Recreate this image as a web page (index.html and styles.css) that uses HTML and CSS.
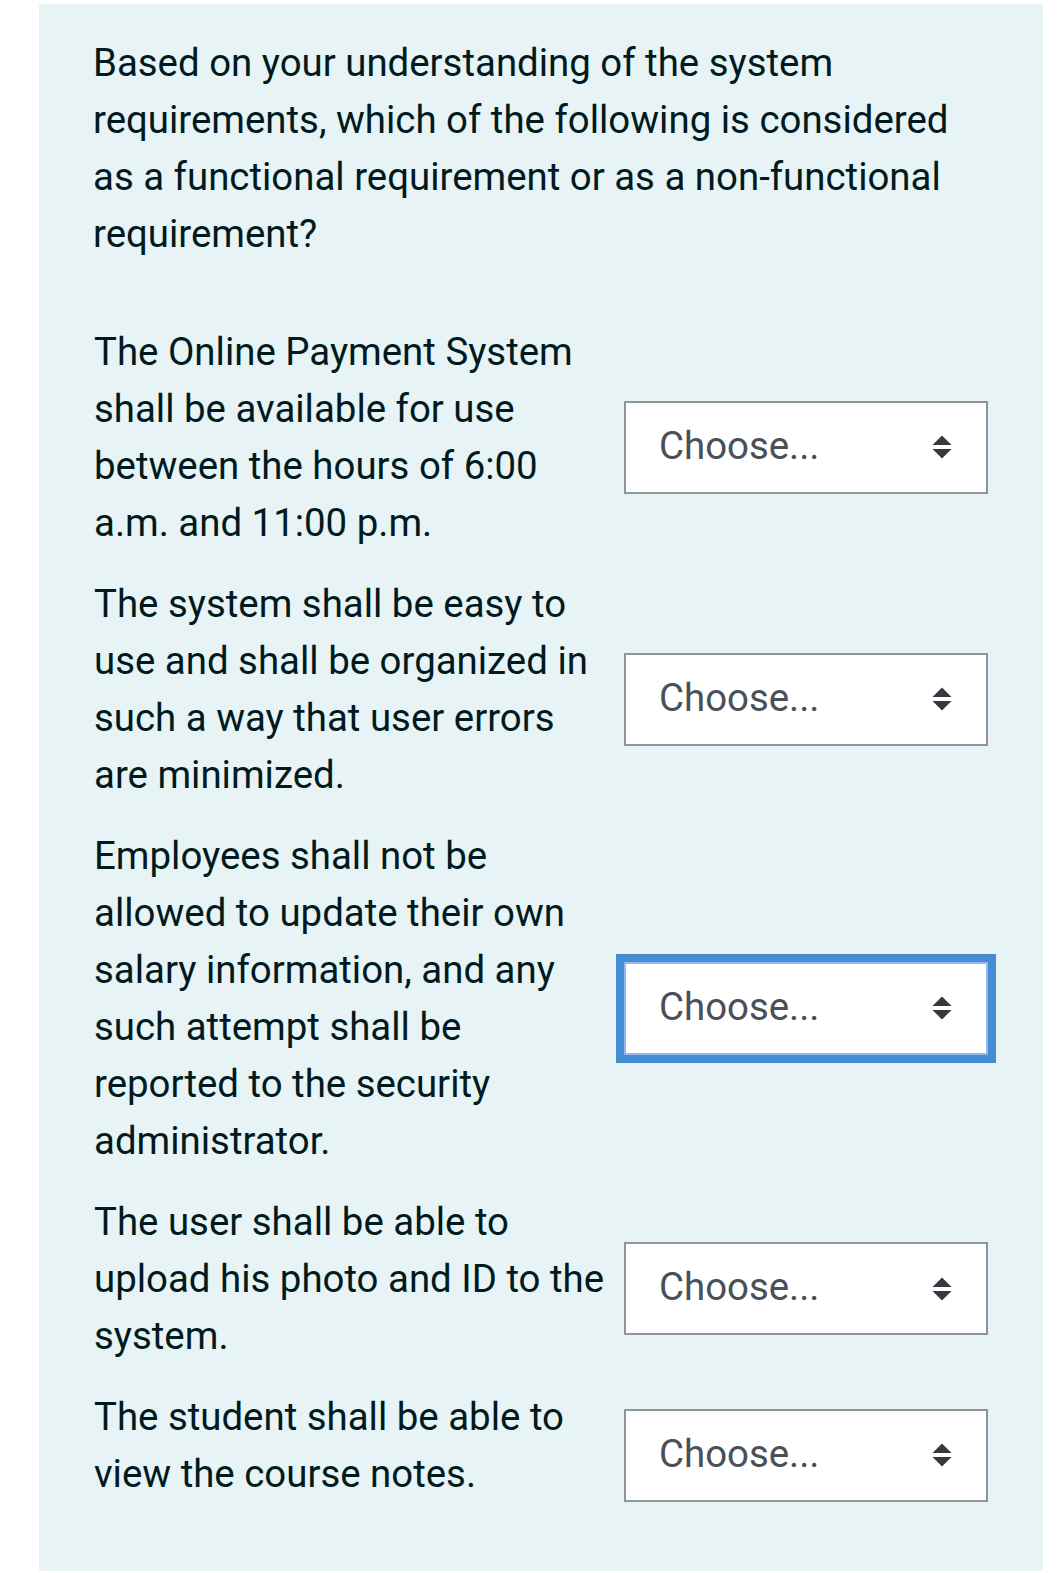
FILE: index.html
```html
<!DOCTYPE html>
<html lang="en">
<head>
<meta charset="utf-8">
<title>Matching question</title>
<link rel="stylesheet" href="styles.css">
</head>
<body>
<div class="panel">
  <p class="question">Based on your understanding of the system requirements, which of the following is considered as a functional requirement or as a non-functional requirement?</p>
  <div class="rows">
    <div class="row">
      <div class="stem">The Online Payment System shall be available for use between the hours of 6:00 a.m. and 11:00 p.m.</div>
      <div class="select"><span>Choose...</span><svg class="arrows" width="22" height="26" viewBox="0 0 22 26"><path d="M1.5 11 L11 1.5 L20.5 11 Z" /><path d="M1.5 15 L20.5 15 L11 24.5 Z" /></svg></div>
    </div>
    <div class="row">
      <div class="stem">The system shall be easy to use and shall be organized in such a way that user errors are minimized.</div>
      <div class="select"><span>Choose...</span><svg class="arrows" width="22" height="26" viewBox="0 0 22 26"><path d="M1.5 11 L11 1.5 L20.5 11 Z" /><path d="M1.5 15 L20.5 15 L11 24.5 Z" /></svg></div>
    </div>
    <div class="row">
      <div class="stem">Employees shall not be allowed to update their own salary information, and any such attempt shall be reported to the security administrator.</div>
      <div class="select focused"><span>Choose...</span><svg class="arrows" width="22" height="26" viewBox="0 0 22 26"><path d="M1.5 11 L11 1.5 L20.5 11 Z" /><path d="M1.5 15 L20.5 15 L11 24.5 Z" /></svg></div>
    </div>
    <div class="row">
      <div class="stem">The user shall be able to upload his photo and ID to the system.</div>
      <div class="select"><span>Choose...</span><svg class="arrows" width="22" height="26" viewBox="0 0 22 26"><path d="M1.5 11 L11 1.5 L20.5 11 Z" /><path d="M1.5 15 L20.5 15 L11 24.5 Z" /></svg></div>
    </div>
    <div class="row">
      <div class="stem">The student shall be able to view the course notes.</div>
      <div class="select"><span>Choose...</span><svg class="arrows" width="22" height="26" viewBox="0 0 22 26"><path d="M1.5 11 L11 1.5 L20.5 11 Z" /><path d="M1.5 15 L20.5 15 L11 24.5 Z" /></svg></div>
    </div>
  </div>
</div>
</body>
</html>
```

FILE: styles.css
```css
html, body {
  margin: 0;
  padding: 0;
  background: #ffffff;
}

body {
  font-family: Roboto, "Liberation Sans", Arial, sans-serif;
  font-size: 38.4px;
  line-height: 57px;
  color: #001a1e;
}

.panel {
  box-sizing: border-box;
  width: 1004px;
  margin: 4px 0 0 39px;
  padding: 30px 55px 49px 54px;
  background: #e7f3f5;
}

.question {
  margin: 0 0 61px 0;
}

.rows {
  display: flex;
  flex-direction: column;
  gap: 4px;
}

.row {
  display: flex;
  align-items: center;
  gap: 15px;
}

.stem {
  width: 516px;
  flex: none;
  padding-left: 1px;
  box-sizing: border-box;
  padding-bottom: 20px;
}

.select {
  box-sizing: border-box;
  width: 364px;
  height: 93px;
  flex: none;
  background: #ffffff;
  border: 2px solid #8f959e;
  display: flex;
  align-items: center;
  justify-content: space-between;
  padding: 0 33px 0 33px;
  color: #495057;
  font-size: 38.4px;
}

.select span {
  line-height: 1;
  margin-top: -2px;
}

.select.focused {
  border-color: #8fbbf0;
  box-shadow: 0 0 0 8px #468cd2;
}

.arrows {
  display: block;
  fill: #343a40;
}
```
